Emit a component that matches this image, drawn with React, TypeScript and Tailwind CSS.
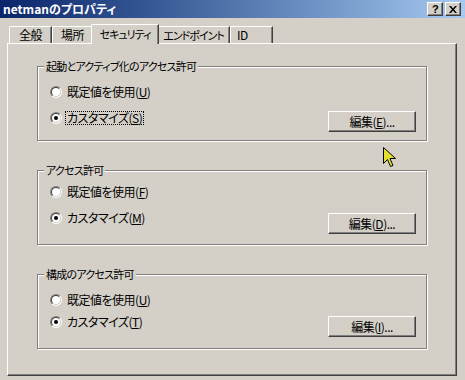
import { ReactNode } from 'react'

function Radio({ checked }: { checked?: boolean }) {
  return (
    <div className="w-[12px] h-[12px] rounded-full border border-t-[#808080] border-l-[#808080] border-r-white border-b-white shrink-0">
      <div className="w-full h-full rounded-full border border-t-[#404040] border-l-[#404040] border-r-[#d4d0c8] border-b-[#d4d0c8] bg-white flex items-center justify-center">
        {checked && <div className="w-[4px] h-[4px] rounded-full bg-black" />}
      </div>
    </div>
  )
}

function RadioRow({ checked, focused, children }: { checked?: boolean; focused?: boolean; children: ReactNode }) {
  return (
    <div className="flex items-center h-[16px] gap-[3px]">
      <Radio checked={checked} />
      <span
        className={
          'px-[1px] leading-[12px] border whitespace-nowrap ' +
          (focused ? 'border-dotted border-black' : 'border-transparent')
        }
      >
        {children}
      </span>
    </div>
  )
}

function EditButton({ children }: { children: ReactNode }) {
  return (
    <button className="w-[88px] h-[21px] flex items-center justify-center border border-t-white border-l-white border-r-[#404040] border-b-[#404040] shadow-[inset_-1px_-1px_0_#808080] bg-[#d4d0c8] leading-none">
      {children}
    </button>
  )
}

function Acc({ k }: { k: string }) {
  return (
    <>
      (<span className="underline underline-offset-[1px]">{k}</span>)
    </>
  )
}

function Tab({ label, width, selected, text = '' }: { label: string; width: string; selected?: boolean; text?: string }) {
  if (selected) {
    return (
      <div
        className={
          'relative z-10 h-[20px] -mx-[2px] -mb-[1px] bg-[#d4d0c8] flex items-start pt-[4px] justify-center border-t border-l border-t-white border-l-white border-r border-r-[#404040] shadow-[inset_-1px_0_0_#808080] rounded-tl-[2px] whitespace-nowrap ' +
          width +
          ' ' +
          text
        }
      >
        {label}
      </div>
    )
  }
  return (
    <div
      className={
        'h-[17px] flex items-center justify-center border-t border-l border-t-white border-l-white border-r border-r-[#404040] shadow-[inset_-1px_0_0_#808080] rounded-tl-[2px] whitespace-nowrap ' +
        width +
        ' ' +
        text
      }
    >
      {label}
    </div>
  )
}

// group box caption sitting on the etched line
function Caption({ children }: { children: ReactNode }) {
  return (
    <span className="absolute left-[6px] top-[-7px] px-[2px] bg-[#d4d0c8] text-[11px] leading-[12px] tracking-[-0.75px] whitespace-nowrap">
      {children}
    </span>
  )
}

export default function App() {
  return (
    <div className="relative w-[465px] h-[380px] overflow-hidden bg-[#d4d0c8] text-[12px] leading-none tracking-[-0.5px] text-black font-['Noto_Sans_CJK_JP',sans-serif] [font-feature-settings:'palt']">
      {/* Title bar */}
      <div className="h-[18px] flex items-center justify-between pl-[3px] pr-[4px] bg-linear-to-r from-[#0a246a] to-[#a6caf0]">
        <span className="text-white font-bold text-[12px] leading-none tracking-normal">netmanのプロパティ</span>
        <div className="flex gap-[2px]">
          <div className="w-[16px] h-[14px] flex items-center justify-center bg-[#d4d0c8] border border-t-white border-l-white border-r-[#404040] border-b-[#404040] shadow-[inset_-1px_-1px_0_#808080] font-['Liberation_Sans',sans-serif] font-bold text-[11px] leading-none">
            ?
          </div>
          <div className="w-[16px] h-[14px] flex items-center justify-center bg-[#d4d0c8] border border-t-white border-l-white border-r-[#404040] border-b-[#404040] shadow-[inset_-1px_-1px_0_#808080]">
            <svg width="8" height="7" viewBox="0 0 8 7">
              <path d="M0 0h2l2 2.5L6 0h2L5 3.5 8 7H6L4 4.5 2 7H0l3-3.5z" fill="#000" />
            </svg>
          </div>
        </div>
      </div>

      {/* Tabs */}
      <div className="mt-[6px] h-[19px] flex items-end pl-[9px]">
        <Tab label="全般" width="w-[43px]" />
        <Tab label="場所" width="w-[41px]" />
        <Tab label="セキュリティ" width="w-[68px]" text="text-[11px] tracking-[-1px]" selected />
        <Tab label="エンドポイント" width="w-[73px]" text="text-[11px] tracking-[-1px]" />
        <Tab label="ID" width="w-[43px]" text="justify-start pl-[6px]" />
      </div>

      {/* Panel */}
      <div className="ml-[7px] w-[450px] h-[333px] border border-t-white border-l-white border-r-[#404040] border-b-[#404040] shadow-[inset_-1px_-1px_0_#808080] pt-[22px] pl-[29px] flex flex-col gap-[29px]">
        {/* Launch and activation */}
        <div className="relative w-[390px] h-[75px] border border-[#808080] shadow-[1px_1px_0_#fff,inset_1px_1px_0_#fff] pl-[12px] pr-[10px] pt-[17px]">
          <Caption>起動とアクティブ化のアクセス許可</Caption>
          <RadioRow>
            既定値を使用<Acc k="U" />
          </RadioRow>
          <div className="mt-[10px] flex items-start justify-between">
            <RadioRow checked focused>
              カスタマイズ<Acc k="S" />
            </RadioRow>
            <div className="mt-[1px]">
              <EditButton>
                編集<Acc k="E" />...
              </EditButton>
            </div>
          </div>
        </div>

        {/* Access */}
        <div className="relative w-[390px] h-[75px] border border-[#808080] shadow-[1px_1px_0_#fff,inset_1px_1px_0_#fff] pl-[12px] pr-[10px] pt-[13px]">
          <Caption>アクセス許可</Caption>
          <RadioRow>
            既定値を使用<Acc k="F" />
          </RadioRow>
          <div className="mt-[10px] flex items-start justify-between">
            <RadioRow checked>
              カスタマイズ<Acc k="M" />
            </RadioRow>
            <div className="mt-[3px]">
              <EditButton>
                編集<Acc k="D" />...
              </EditButton>
            </div>
          </div>
        </div>

        {/* Configuration */}
        <div className="relative w-[390px] h-[75px] border border-[#808080] shadow-[1px_1px_0_#fff,inset_1px_1px_0_#fff] pl-[12px] pr-[10px] pt-[17px]">
          <Caption>構成のアクセス許可</Caption>
          <RadioRow>
            既定値を使用<Acc k="U" />
          </RadioRow>
          <div className="mt-[6px] flex items-start justify-between">
            <RadioRow checked>
              カスタマイズ<Acc k="T" />
            </RadioRow>
            <div className="mt-[2px]">
              <EditButton>
                編集<Acc k="I" />...
              </EditButton>
            </div>
          </div>
        </div>
      </div>

      {/* Mouse pointer */}
      <svg className="absolute left-[383px] top-[147px]" width="14" height="21" viewBox="0 0 14 21">
        <path
          d="M0.5 0.5 L0.5 16.5 L4.5 12.5 L7.5 19.5 L10 18.5 L7 11.5 L12.5 11.5 Z"
          fill="#e4e032"
          stroke="#000"
          strokeWidth="1"
        />
      </svg>
    </div>
  )
}
